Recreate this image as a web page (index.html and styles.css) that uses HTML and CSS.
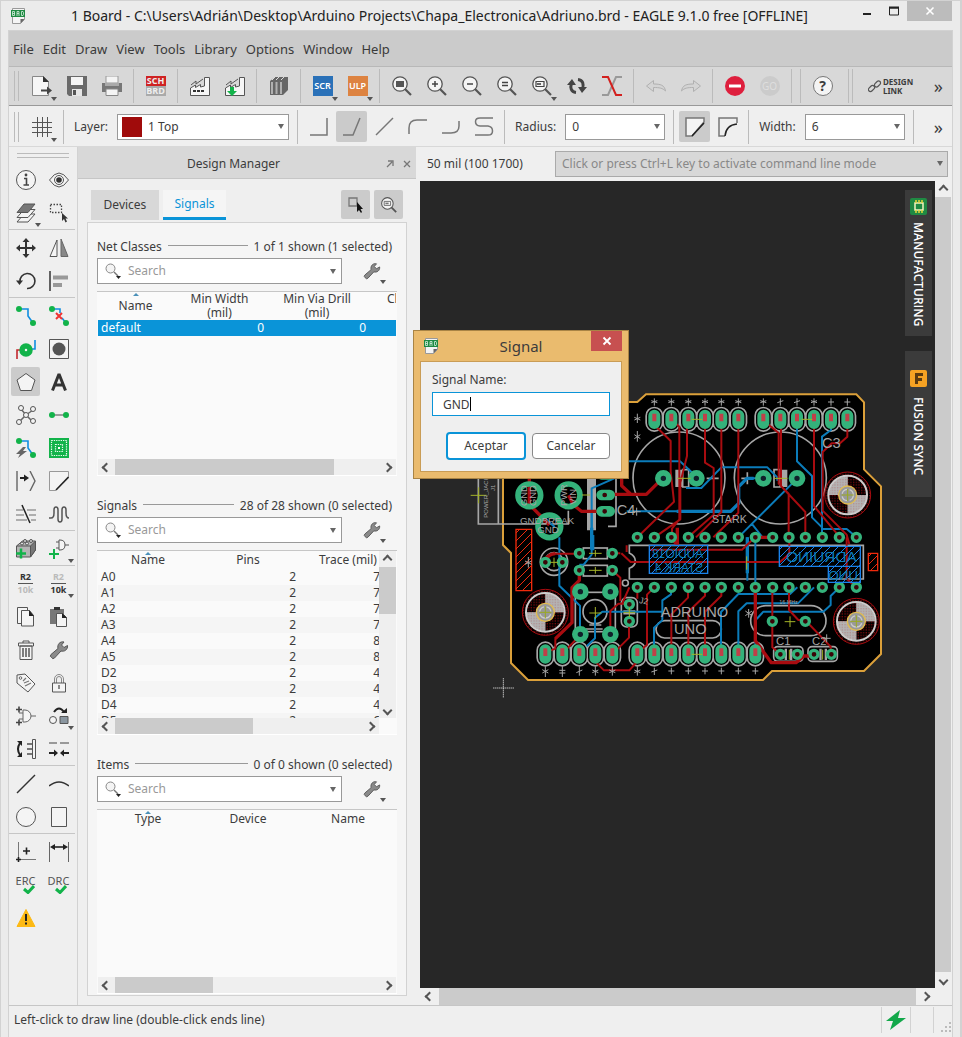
FILE: index.html
```html
<!DOCTYPE html>
<html lang="en">
<head>
    <meta charset="UTF-8">
    <meta name="viewport" content="width=device-width, initial-scale=1.0">
    <title>1 Board - EAGLE 9.1.0 free</title>
    <link rel="stylesheet" href="styles.css">
</head>
<body>
    <!-- shared icons -->
    <svg class="sprite" aria-hidden="true">
        <symbol id="i-brd" viewBox="0 0 16 16">
            <path d="M2.500.500h12v11l-4 4h-8z" fill="#f4f4f4" stroke="#999" />
            <path d="M14.500 11h-4v4.500z" fill="#666" />
            <path d="M1 2h14v7H1z" fill="#1f8a43" />
            <path d="M2.500 3.500v4h2v-4zM2.500 5.500h2M7 8V3.500h2v2H7M9 5.500V8M11.500 3.500v4h1.500l.5-1v-2l-.5-1z" fill="none" stroke="#d8f0df" stroke-width=".8" />
        </symbol>
        <symbol id="i-search" viewBox="0 0 16 16">
            <circle cx="5.500" cy="5.500" r="4.500" fill="#f4f4f4" stroke="#888" />
            <path d="M9 9l4 4" stroke="#777" stroke-width="1.500" />
            <path d="M11 13h5l-2.500 3z" fill="#222" />
        </symbol>
        <symbol id="i-wrench" viewBox="0 0 20 20">
            <path d="M2.500 17.500a2 2 0 0 1-.5-3L9 8.500c-1-4 2-7.500 6-6.500l-2.500 3 2.500 2.500 3.500-2c.5 4-3 6.500-6.500 5.500L5.500 18a2 2 0 0 1-3-.5z" fill="#8a8a8a" stroke="#555" />
        </symbol>
        <symbol id="i-lens" viewBox="0 0 20 20">
            <circle cx="8" cy="8" r="7.200" fill="#f4f4f4" stroke="#555" stroke-width="1.300" />
            <path d="M13 13l6 6" stroke="#555" stroke-width="2.200" />
        </symbol>
        <symbol id="i-factory" viewBox="0 0 20 20">
            <path d="M.5 19.500V12l5-3v2.500l5-3v2.500l4-1V1.500h5v18z" fill="#f6f6f6" stroke="#555" />
            <path d="M1 9l5-4v3l7-5" fill="none" stroke="#555" />
        </symbol>
        <symbol id="i-gate" viewBox="0 0 20 20">
            <path d="M7 4v12h2a6 6 0 0 0 0-12zM3 7h4M3 13h4M15 10h5" fill="#f6f6f6" stroke="#666" />
        </symbol>
    </svg>

    <div class="window">
        <header class="titlebar">
            <svg class="app-icon"><use href="#i-brd" /></svg>
            <h1>1 Board - C:\Users\Adrián\Desktop\Arduino Projects\Chapa_Electronica\Adriuno.brd - EAGLE 9.1.0 free [OFFLINE]</h1>
            <div class="window-buttons">
                <button aria-label="Minimize"><svg viewBox="0 0 10 10"><path d="M1 8h8" stroke="#222" stroke-width="2" /></svg></button>
                <button aria-label="Maximize"><svg viewBox="0 0 10 10"><path d="M0 2h10M.5 2v7h9V2" fill="none" stroke="#222" /><path d="M0 1.500h10" stroke="#222" stroke-width="2" /></svg></button>
                <button class="close" aria-label="Close"><svg viewBox="0 0 10 10"><path d="M1.500 1.500l7 7m0-7l-7 7" stroke="#fff" stroke-width="1.600" /></svg></button>
            </div>
        </header>

        <div class="frame">
            <nav class="menubar">
                <a href="#">File</a>
                <a href="#">Edit</a>
                <a href="#">Draw</a>
                <a href="#">View</a>
                <a href="#">Tools</a>
                <a href="#">Library</a>
                <a href="#">Options</a>
                <a href="#">Window</a>
                <a href="#">Help</a>
            </nav>

            <div class="toolbar toolbar-main">
                <span class="grip"></span>
                <button class="tb drop" aria-label="New"><svg viewBox="0 0 20 20"><path d="M.5.500h11l5 5v14H.5z" fill="#f6f6f6" stroke="#888" /><path d="M11 0v6h6z" fill="#333" /><path d="M9 14.500h7" stroke="#444" stroke-width="2" /><path d="M15 10.500l5 4-5 4z" fill="#444" /></svg></button>
                <button class="tb" aria-label="Save"><svg viewBox="0 0 20 20"><path d="M0 0h20v20H2l-2-2z" fill="#6a6a6a" /><path d="M4 1h12v8H4z" fill="#f4f4f4" /><path d="M5 13h10v7H5z" fill="#e6e6e6" /><path d="M6 14h3v5H6z" fill="#555" /></svg></button>
                <button class="tb" aria-label="Print"><svg viewBox="0 0 20 20"><path d="M4 0h12v7H4z" fill="#f4f4f4" stroke="#999" /><path d="M0 7h20v9H0z" fill="#777" /><path d="M3 7h14v3H3z" fill="#aaa" /><path d="M4 13h12v6.500H4z" fill="#f4f4f4" stroke="#888" /></svg></button>
                <span class="sep"></span>
                <button class="tb" aria-label="Switch to schematic"><span class="sch-brd"><b>SCH</b><b>BRD</b></span></button>
                <span class="sep"></span>
                <button class="tb" aria-label="Manufacturing preview"><svg viewBox="0 0 20 20"><use href="#i-factory" /><path d="M3 15h11" stroke="#333" stroke-width="2" stroke-dasharray="3 1" /></svg></button>
                <button class="tb" aria-label="Export CAM"><svg viewBox="0 0 20 20"><use href="#i-factory" /><path d="M5 11h4v4h3l-5 5-5-5h3z" fill="#12b34a" /></svg></button>
                <span class="sep"></span>
                <button class="tb" aria-label="Library manager"><svg viewBox="0 0 20 20"><path d="M1 5l5-4h13v13l-5 5H1z" fill="#666" /><path d="M1.500 5.500h3v13h-3zM6 5.500h3v13H6zM10.500 5.500h3v13h-3z" fill="#b0b0b0" stroke="#666" /><path d="M3 4l3-3M7 4l3-3M12 4l3-3" stroke="#ddd" /></svg></button>
                <span class="sep"></span>
                <button class="tb drop" aria-label="Run script"><span class="badge scr">SCR</span></button>
                <button class="tb drop" aria-label="Run ULP"><span class="badge ulp">ULP</span></button>
                <span class="sep"></span>
                <button class="tb" aria-label="Zoom to fit"><svg viewBox="0 0 20 20"><use href="#i-lens" /><path d="M4 5h8v6H4z" fill="#555" /></svg></button>
                <button class="tb" aria-label="Zoom in"><svg viewBox="0 0 20 20"><use href="#i-lens" /><path d="M5 8h6M8 5v6" stroke="#444" stroke-width="1.500" /></svg></button>
                <button class="tb" aria-label="Zoom out"><svg viewBox="0 0 20 20"><use href="#i-lens" /><path d="M5 8h6" stroke="#444" stroke-width="1.500" /></svg></button>
                <button class="tb" aria-label="Redraw"><svg viewBox="0 0 20 20"><use href="#i-lens" /><path d="M5 6.500h6M5 9.500h6" stroke="#444" stroke-width="1.500" /></svg></button>
                <button class="tb drop" aria-label="Zoom select"><svg viewBox="0 0 20 20"><use href="#i-lens" /><path d="M4 5.500h8v5H4z" fill="none" stroke="#444" stroke-width="1.200" /><path d="M5 7h4v2H5z" fill="#666" /></svg></button>
                <button class="tb" aria-label="Refresh"><svg viewBox="0 0 20 20"><path d="M9 16.500C4 16 3 12 4.500 7M11 3.500c5 .5 6 4.500 4.500 9.500" fill="none" stroke="#444" stroke-width="3" /><path d="M0 9l5-6 4 6zM11 11h9l-5 6z" fill="#444" /></svg></button>
                <button class="tb" aria-label="Swap layers"><svg viewBox="0 0 20 20"><path d="M0 19h6l8-18h6" fill="none" stroke="#999" stroke-width="2" /><path d="M0 1h6l8 18h6" fill="none" stroke="#d3211f" stroke-width="2" /></svg></button>
                <span class="sep"></span>
                <button class="tb" aria-label="Undo" disabled><svg viewBox="0 0 20 20"><path d="M.5 10l7-5.500v3.500c7 0 11 1 12 7-3-3-6-3.500-12-3.500v4z" fill="#d4d4d4" stroke="#b0b0b0" /></svg></button>
                <button class="tb" aria-label="Redo" disabled><svg viewBox="0 0 20 20"><path d="M19.500 10l-7-5.500v3.500c-7 0-11 1-12 7 3-3 6-3.500 12-3.500v4z" fill="#d4d4d4" stroke="#b0b0b0" /></svg></button>
                <span class="sep"></span>
                <button class="tb" aria-label="Stop"><svg viewBox="0 0 20 20"><circle cx="10" cy="10" r="10" fill="#de1f3d" /><path d="M4 8.500h12v3H4z" fill="#fff" /></svg></button>
                <button class="tb" aria-label="Go" disabled><span class="go">GO</span></button>
                <span class="sep"></span>
                <span class="sep"></span>
                <button class="tb" aria-label="Help"><span class="help">?</span></button>
                <span class="sep wide"></span>
                <span class="sep tight"></span>
                <button class="design-link"><svg viewBox="0 0 14 14"><g fill="none" stroke="#555" stroke-width="1.200"><rect x="0" y="7.500" width="7" height="4" rx="2" transform="rotate(-45 3.500 9.500)" /><rect x="6" y="3" width="7" height="4" rx="2" transform="rotate(-45 9.500 5)" /></g></svg><span>DESIGN<br>LINK</span></button>
                <button class="more" aria-label="More">»</button>
            </div>

            <div class="toolbar toolbar-params">
                <span class="grip"></span>
                <button class="tb drop" aria-label="Grid"><svg viewBox="0 0 20 20"><path d="M0 5.500h20M0 10.500h20M0 15.500h20M5.500 0v20M10.500 0v20M15.500 0v20" stroke="#555" /></svg></button>
                <span class="sep"></span>
                <label for="layer">Layer:</label>
                <div class="select layer"><select id="layer"><option>1 Top</option></select></div>
                <span class="sep"></span>
                <button class="tb2" aria-label="Bend 0"><svg viewBox="0 0 20 20"><path d="M1 18h17V1" /></svg></button>
                <button class="tb2 active" aria-label="Bend 1"><svg viewBox="0 0 20 20"><path d="M1 18h10l7-17" /></svg></button>
                <button class="tb2" aria-label="Bend 2"><svg viewBox="0 0 20 20"><path d="M1 18L18 1" /></svg></button>
                <button class="tb2" aria-label="Bend 3"><svg viewBox="0 0 20 20"><path d="M1 17v-6q0-8 8-8h10" /></svg></button>
                <button class="tb2" aria-label="Bend 4"><svg viewBox="0 0 20 20"><path d="M1 16h9q8 0 8-7V4" /></svg></button>
                <button class="tb2" aria-label="Bend 5"><svg viewBox="0 0 20 20"><path d="M19 1H6c-6 0-6 7 0 8h8c6 1 6 9 0 9H1" /></svg></button>
                <span class="sep"></span>
                <label for="radius">Radius:</label>
                <div class="select"><select id="radius"><option>0</option></select></div>
                <span class="sep"></span>
                <button class="tb2 active" aria-label="Miter straight"><svg viewBox="0 0 20 20"><path class="paper" d="M19 5V1H1v18h6z" /><path class="dark" d="M7 19L19 6" /></svg></button>
                <button class="tb2" aria-label="Miter round"><svg viewBox="0 0 20 20"><path d="M19 6V1H1v18h6" /><path class="dark" d="M7 19q1-11 12-12" /></svg></button>
                <span class="sep"></span>
                <label for="width">Width:</label>
                <div class="select"><select id="width"><option>6</option></select></div>
                <span class="sep"></span>
                <button class="more" aria-label="More">»</button>
            </div>

            <main class="workspace">
                <aside class="toolbox">
                    <span class="grip-h"></span>
                    <div class="tools">
                        <button aria-label="Info"><svg viewBox="0 0 20 20"><circle cx="10" cy="10" r="9.500" class="w" /><path d="M8 8.500h2.500v6M7.500 15h5.500" fill="none" stroke="#444" stroke-width="1.600" /><circle cx="10" cy="5" r="1.400" fill="#444" /></svg></button>
                        <button aria-label="Show"><svg viewBox="0 0 20 20"><path d="M.5 10q9.500-14 19 0-9.500 14-19 0z" class="w" /><circle cx="10" cy="10" r="4.500" class="w" /><circle cx="10" cy="10" r="2.800" fill="#333" /></svg></button>
                        <button class="drop" aria-label="Layers"><svg viewBox="0 0 20 20"><path d="M1 19h11l7-8H8z" class="w" /><path d="M1 14.500h11l7-8H8z" class="w" /><path d="M1 9.500h11l7-8.500H8z" fill="#777" stroke="#555" /></svg></button>
                        <button aria-label="Group"><svg viewBox="0 0 20 20"><path d="M1.500 1.500h11v8h-11z" fill="none" stroke="#444" stroke-width="1.300" stroke-dasharray="1.500 1.500" /><path d="M13 10v8l2-2 1.500 3.500 1.500-1-1.500-3H19z" fill="#333" /></svg></button>
                        <hr>
                        <button aria-label="Move"><svg viewBox="0 0 20 20"><path d="M10 2v16M2 10h16" stroke="#333" stroke-width="2" /><path d="M6.500 4L10 0l3.500 4zM6.500 16l3.500 4 3.500-4zM4 6.500L0 10l4 3.500zM16 6.500l4 3.500-4 3.500z" fill="#333" /></svg></button>
                        <button aria-label="Mirror"><svg viewBox="0 0 20 20"><path d="M8 2v16.500H1z" class="w" /><path d="M12 1v17.500h7z" fill="#888" stroke="#666" /></svg></button>
                        <button aria-label="Rotate"><svg viewBox="0 0 20 20"><path d="M4 11a7.500 7.500 0 1 1 7 6.500" fill="none" stroke="#333" stroke-width="1.600" /><path d="M0 9.500h7L3.500 14z" fill="#333" /></svg></button>
                        <button aria-label="Align"><svg viewBox="0 0 20 20"><path d="M1 0v20" stroke="#333" stroke-width="1.500" /><path d="M4 4.500h15v4H4zM4 12h9v4H4z" fill="#999" /></svg></button>
                        <hr>
                        <button aria-label="Route"><svg viewBox="0 0 20 20"><path d="M3 3h9v7l5 7" class="b" /><circle cx="3" cy="3" r="3" class="g" /><circle cx="17" cy="17" r="3" class="g" /></svg></button>
                        <button aria-label="Ripup"><svg viewBox="0 0 20 20"><path d="M3 3h8v4M13 12l4 5" class="b" /><circle cx="3" cy="3" r="3" class="g" /><circle cx="17" cy="17" r="3" class="g" /><path d="M7 7l6 6m0-6l-6 6" stroke="#e33" stroke-width="2" /></svg></button>
                        <button aria-label="Via"><svg viewBox="0 0 20 20"><path d="M1 20V11h4" fill="none" stroke="#c1272d" stroke-width="1.600" /><path d="M15 10h4V1" class="b" /><circle cx="10" cy="11" r="4" fill="#f4f4f4" stroke="#12b34a" stroke-width="5.500" /></svg></button>
                        <button aria-label="Hole"><svg viewBox="0 0 20 20"><path d="M.5.500h19v19H.5z" class="w" /><circle cx="10" cy="10" r="6.500" fill="#555" /></svg></button>
                        <button class="active" aria-label="Polygon"><svg viewBox="0 0 20 20"><path d="M10 1.500l9 6.500-3.500 10.500h-11L1 8z" class="w" /></svg></button>
                        <button aria-label="Text"><svg viewBox="0 0 20 20"><path d="M3.500 18.500L10 2l6.500 16.500M6 13h8" fill="none" stroke="#333" stroke-width="3" stroke-linejoin="bevel" /></svg></button>
                        <button aria-label="Ratsnest"><svg viewBox="0 0 20 20"><path d="M10 10L5 4M10 10l7-5M10 10l-6 6M10 10l6 6" stroke="#666" stroke-width="1.500" /><g class="w"><circle cx="5" cy="3" r="2.500" /><circle cx="17" cy="4" r="2.500" /><circle cx="3" cy="17" r="2.500" /><circle cx="17" cy="16" r="2.500" /><circle cx="10" cy="10" r="2.500" /></g></svg></button>
                        <button aria-label="Signal"><svg viewBox="0 0 20 20"><path d="M3 10h14" stroke="#888" stroke-width="1.600" /><circle cx="3" cy="10" r="3" class="g" /><circle cx="17" cy="10" r="3" class="g" /></svg></button>
                        <button aria-label="Autoroute"><svg viewBox="0 0 20 20"><path d="M3 3h9v7l5 7" class="b" /><circle cx="3" cy="3" r="3" class="g" /><circle cx="17" cy="17" r="3" class="g" /><path d="M7 9l-7 7h4l-2 4 9-7H7l3-4z" fill="#666" /></svg></button>
                        <button aria-label="Fanout"><svg viewBox="0 0 20 20"><path d="M0 0h20v20H0z" class="g" /><path d="M2.500 2.500h15v15h-15zM6.500 6.500h7v7h-7z" fill="none" stroke="#eafbef" stroke-width="1.200" stroke-dasharray="1.300 1" /><path d="M9 9h2v2H9z" fill="#fff" /></svg></button>
                        <button aria-label="Split"><svg viewBox="0 0 20 20"><path d="M1 0v20M14 0l5 10-5 10" fill="none" stroke="#666" stroke-width="1.400" /><path d="M4 7h5" stroke="#222" stroke-width="2" /><path d="M8 3.500L13 7l-5 3.500z" fill="#222" /></svg></button>
                        <button aria-label="Miter"><svg viewBox="0 0 20 20"><path d="M19.500 6V.5H.5v19H7" class="w light" /><path d="M7 19L19.500 6" stroke="#222" stroke-width="1.600" /></svg></button>
                        <button aria-label="Slice"><svg viewBox="0 0 20 20"><path d="M0 6h7M11 6h9M0 11h8M13 11h7M0 16h11M15 16h5" stroke="#999" stroke-width="1.500" /><path d="M6 1l8 18" stroke="#222" stroke-width="1.500" /></svg></button>
                        <button aria-label="Meander"><svg viewBox="0 0 20 20"><path d="M0 14h2q3 0 3-5V6q0-3 2-3t2 3v9q0 3 2 3t2-3V6q0-3 2-3t2 3v3q0 5 3 5" fill="none" stroke="#555" stroke-width="1.500" /></svg></button>
                        <hr>
                        <button aria-label="Add"><svg viewBox="0 0 20 20"><path d="M.5 7l6-5h13v9l-5 7H.5z" fill="#b4b4b4" stroke="#555" /><path d="M14.500 7l5-5v9l-5 7z" fill="#777" stroke="#555" /><path d="M.5 7h14" stroke="#555" /><g fill="#ddd" stroke="#555"><circle cx="6" cy="4.500" r="1.500" /><circle cx="11" cy="4.500" r="1.500" /><circle cx="9" cy="2" r="1.500" /><circle cx="15" cy="2" r="1.500" /></g><path d="M0 14.500h10M5 9.500v10" stroke="#12b34a" stroke-width="2.500" /></svg></button>
                        <button class="drop" aria-label="Invoke"><svg viewBox="0 0 20 20"><path d="M10 1v10h1q5 0 5-5t-5-5zM7 3h3M7 9h3M16 6h4" class="w" /><path d="M0 15h10M5 10v10" stroke="#12b34a" stroke-width="2" /></svg></button>
                        <hr>
                        <button aria-label="Name"><span class="r2">R2<i>10k</i></span></button>
                        <button class="drop" aria-label="Value"><span class="r2 value">R2<i>10k</i></span></button>
                        <button aria-label="Copy"><svg viewBox="0 0 20 20"><path d="M1.500.500h10v16h-10z" class="w" /><path d="M5.500 3.500h8l4 5v10.500h-12z" class="w" /><path d="M13 3v6h5z" fill="#222" /></svg></button>
                        <button aria-label="Paste"><svg viewBox="0 0 20 20"><path d="M1 2h14v15H1z" fill="#777" /><path d="M5 0h6v3H5z" fill="#333" /><path d="M7.500 6.500h6l4 4v9h-10z" class="w" /><path d="M13 6v5h5z" fill="#222" /></svg></button>
                        <button aria-label="Delete"><svg viewBox="0 0 20 20"><path d="M2.500 3h15v3h-15zM7 3V1h6v2M4 6h12v13.500H4z" class="w" /><path d="M7 8v9M10 8v9M13 8v9" stroke="#555" stroke-width="1.500" /></svg></button>
                        <button aria-label="Properties"><svg viewBox="0 0 20 20"><use href="#i-wrench" /></svg></button>
                        <button aria-label="Attributes"><svg viewBox="0 0 20 20"><path d="M1 2l8-1 10 10-7 8L1 10z" class="w" /><circle cx="4.500" cy="5" r="1.300" fill="none" stroke="#666" /><path d="M7 8l3-3M8 10l5-2M9 13l6-3" stroke="#777" stroke-width="1.200" /></svg></button>
                        <button aria-label="Lock"><svg viewBox="0 0 20 20"><path d="M5.500 10V6a4.500 4.500 0 0 1 9 0v4M7.500 10V6a2.500 2.500 0 0 1 5 0v4" fill="none" stroke="#888" /><path d="M3.500 10h13v9h-13z" class="w" /><path d="M10 12v4" stroke="#666" stroke-width="1.500" /></svg></button>
                        <button aria-label="Gateswap"><svg viewBox="0 0 20 20"><use href="#i-gate" /><path d="M0 3.500h6M3 .5v6M0 16.500h6M3 13.500v6" stroke="#444" stroke-width="1.600" /></svg></button>
                        <button class="drop" aria-label="Replace"><svg viewBox="0 0 20 20"><path d="M5 6q5-7 10 0" fill="none" stroke="#222" stroke-width="2" /><path d="M12 7h6V2z" fill="#222" /><circle cx="4" cy="14" r="3.500" class="w" /><path d="M11 10.500h8v7h-8z" fill="#8a96a0" stroke="#555" /></svg></button>
                        <button aria-label="Pinswap"><svg viewBox="0 0 20 20"><path d="M4 4q-4 6 0 12" fill="none" stroke="#222" stroke-width="2" /><path d="M1 2h5v5zM1 18h5v-5z" fill="#222" /><path d="M11 5h6M11 10h6M11 15h6" stroke="#777" stroke-width="2" /><path d="M16.500.500h3v19h-3z" class="w" /></svg></button>
                        <button aria-label="Optimize"><svg viewBox="0 0 20 20"><path d="M0 4h8M11 4h9" stroke="#999" stroke-width="2" /><path d="M0 14h6M14 14h6" stroke="#222" stroke-width="2" /><path d="M5 10.500l4 3.500-4 3.500zM15 10.500L11 14l4 3.500z" fill="#222" /></svg></button>
                        <hr>
                        <button aria-label="Line"><svg viewBox="0 0 20 20"><path d="M1 19L19 1" stroke="#333" stroke-width="1.500" /></svg></button>
                        <button aria-label="Arc"><svg viewBox="0 0 20 20"><path d="M0 12q10-8 20 0" fill="none" stroke="#333" stroke-width="1.500" /></svg></button>
                        <button aria-label="Circle"><svg viewBox="0 0 20 20"><circle cx="10" cy="10" r="9.500" class="w" /></svg></button>
                        <button aria-label="Rect"><svg viewBox="0 0 20 20"><path d="M2.500.500h15v19h-15z" class="w" /></svg></button>
                        <hr>
                        <button aria-label="Mark"><svg viewBox="0 0 20 20"><path d="M2.500 0v16M4 17.500h16" stroke="#777" /><path d="M0 17.500h5M2.500 15v5M7 9h7M10.500 5.500v7" stroke="#222" stroke-width="1.600" /></svg></button>
                        <button aria-label="Dimension"><svg viewBox="0 0 20 20"><path d="M.5 0v20M19.500 0v20" stroke="#666" /><path d="M3 5h14" stroke="#222" stroke-width="1.600" /><path d="M1 5l5-3v6zM19 5l-5-3v6z" fill="#222" /></svg></button>
                        <button aria-label="ERC"><span class="check">ERC<svg viewBox="0 0 12 9"><path d="M1 4l4 3.500L11 1" fill="none" stroke="#12b34a" stroke-width="3" /></svg></span></button>
                        <button aria-label="DRC"><span class="check">DRC<svg viewBox="0 0 12 9"><path d="M1 4l4 3.500L11 1" fill="none" stroke="#12b34a" stroke-width="3" /></svg></span></button>
                        <button aria-label="Errors"><svg viewBox="0 0 20 20"><path d="M10 1.500l9 17H1z" fill="#fdb913" stroke="#fdb913" stroke-linejoin="round" /><path d="M10 6v7M10 14.500v2" stroke="#222" stroke-width="2" /></svg></button>
                    </div>
                </aside>

                <section class="manager">
                    <div class="manager-title">
                        <h2>Design Manager</h2>
                        <button aria-label="Undock"><svg viewBox="0 0 8 8"><path d="M1 7l5-5M2 1h5v5" fill="none" stroke="#777" stroke-width="1.300" /></svg></button>
                        <button aria-label="Close panel"><svg viewBox="0 0 8 8"><path d="M1 1l6 6m0-6L1 7" stroke="#777" stroke-width="1.300" /></svg></button>
                    </div>
                    <div class="tabs">
                        <button class="tab">Devices</button>
                        <button class="tab current">Signals</button>
                        <span class="spacer"></span>
                        <button class="tool" aria-label="Select"><svg viewBox="0 0 16 16"><path d="M1 1h8v8H1z" fill="none" stroke="#777" stroke-width="1.300" /><path d="M9 5v10l2-2 2 3 1-1-1.500-3H15z" fill="#111" /></svg></button>
                        <button class="tool" aria-label="Zoom to selection"><svg viewBox="0 0 20 20"><use href="#i-lens" /><path d="M4 5.500h8v5H4z" fill="none" stroke="#555" /><path d="M5.500 7h4v2h-4z" fill="#777" /></svg></button>
                    </div>
                    <div class="panels">
                        <div class="panel">
                            <div class="panel-head"><span>Net Classes</span><i></i><span>1 of 1 shown (1 selected)</span></div>
                            <div class="search-row">
                                <div class="search"><svg><use href="#i-search" /></svg><input type="text" placeholder="Search" aria-label="Search net classes"></div>
                                <button class="wrench" aria-label="Net class options"><svg><use href="#i-wrench" /></svg></button>
                            </div>
                            <div class="list">
                                <div class="list-body">
                                    <table class="net-classes">
                                        <thead><tr><th class="sorted">Name</th><th>Min Width<br>(mil)</th><th>Min Via Drill<br>(mil)</th><th class="cut">Cl</th></tr></thead>
                                        <tbody><tr class="selected"><td>default</td><td>0</td><td>0</td><td></td></tr></tbody>
                                    </table>
                                </div>
                                <div class="hscroll"><button aria-label="Scroll left"></button><div class="track"><span class="thumb long"></span></div><button class="next" aria-label="Scroll right"></button></div>
                            </div>
                        </div>

                        <div class="panel">
                            <div class="panel-head"><span>Signals</span><i></i><span>28 of 28 shown (0 selected)</span></div>
                            <div class="search-row">
                                <div class="search"><svg><use href="#i-search" /></svg><input type="text" placeholder="Search" aria-label="Search signals"></div>
                                <button class="wrench" aria-label="Signal options"><svg><use href="#i-wrench" /></svg></button>
                            </div>
                            <div class="list with-vscroll">
                                <div class="list-body">
                                    <table class="signals">
                                        <thead><tr><th class="sorted">Name</th><th>Pins</th><th>Trace (mil)</th></tr></thead>
                                        <tbody>
                                            <tr><td>A0</td><td>2</td><td>7</td></tr>
                                            <tr><td>A1</td><td>2</td><td>7</td></tr>
                                            <tr><td>A2</td><td>2</td><td>7</td></tr>
                                            <tr><td>A3</td><td>2</td><td>7</td></tr>
                                            <tr><td>A4</td><td>2</td><td>8</td></tr>
                                            <tr><td>A5</td><td>2</td><td>8</td></tr>
                                            <tr><td>D2</td><td>2</td><td>4</td></tr>
                                            <tr><td>D3</td><td>2</td><td>4</td></tr>
                                            <tr><td>D4</td><td>2</td><td>4</td></tr>
                                            <tr><td>D5</td><td>2</td><td>6</td></tr>
                                        </tbody>
                                    </table>
                                </div>
                                <div class="vscroll"><button class="up" aria-label="Scroll up"></button><div class="track"><span class="thumb short"></span></div><button class="down" aria-label="Scroll down"></button></div>
                                <div class="hscroll"><button aria-label="Scroll left"></button><div class="track"><span class="thumb mid"></span></div><button class="next" aria-label="Scroll right"></button></div>
                            </div>
                        </div>

                        <div class="panel">
                            <div class="panel-head"><span>Items</span><i></i><span>0 of 0 shown (0 selected)</span></div>
                            <div class="search-row">
                                <div class="search"><svg><use href="#i-search" /></svg><input type="text" placeholder="Search" aria-label="Search items"></div>
                                <button class="wrench" aria-label="Item options"><svg><use href="#i-wrench" /></svg></button>
                            </div>
                            <div class="list">
                                <div class="list-body">
                                    <table class="items">
                                        <thead><tr><th class="sorted">Type</th><th>Device</th><th>Name</th></tr></thead>
                                    </table>
                                </div>
                                <div class="hscroll"><button aria-label="Scroll left"></button><div class="track"><span class="thumb small"></span></div><button class="next" aria-label="Scroll right"></button></div>
                            </div>
                        </div>
                    </div>
                </section>

                <section class="editor">
                    <div class="command-row">
                        <span class="coords">50 mil (100 1700)</span>
                        <div class="select command"><select aria-label="Command line"><option>Click or press Ctrl+L key to activate command line mode</option></select></div>
                    </div>
                    <div class="canvas">
                        <!-- board drawing, 3 units per screen pixel -->
                        <svg class="board" viewBox="0 0 1545 2421">
                            <defs>
                                <pattern id="dots" width="8" height="8" patternUnits="userSpaceOnUse"><path d="M0 0h4v4H0z" fill="#a80c10" /></pattern>
                                <pattern id="hatch" width="24" height="24" patternUnits="userSpaceOnUse"><path d="M-6 30L30-6M-6 6L6-6M18 30L30 18" stroke="#1a82ea" stroke-width="3" /></pattern>
                                <pattern id="hatch-red" width="24" height="24" patternUnits="userSpaceOnUse"><path d="M-6 30L30-6M-6 6L6-6M18 30L30 18" stroke="#ee2a0c" stroke-width="3" /></pattern>
                                <path id="headers" d="M703 704v22M754 704v22M805 704v22M855 704v22M904 704v22M955 704v22M1030 704v22M1081 704v22M1131 704v22M1182 704v22M1233 704v22M1282 704v22M376 1408v22M427 1408v22M478 1408v22M526 1408v22M577 1408v22M652 1408v22M703 1408v22M754 1408v22M805 1408v22M855 1408v22M904 1408v22M955 1408v22M1006 1408v22" />
                                <path id="pins" d="M652 1069h.1M703 1069h.1M754 1069h.1M805 1069h.1M855 1069h.1M904 1069h.1M955 1069h.1M1006 1069h.1M1058 1069h.1M1107 1069h.1M1156 1069h.1M1207 1069h.1M1258 1069h.1M1309 1069h.1M652 1219h.1M703 1219h.1M754 1219h.1M805 1219h.1M855 1219h.1M904 1219h.1M955 1219h.1M1006 1219h.1M1058 1219h.1M1107 1219h.1M1156 1219h.1M1207 1219h.1M1258 1219h.1M1309 1219h.1M376 1144h.1M427 1144h.1M478 1117h.1M577 1117h.1M478 1168h.1M577 1168h.1M628 1270h.1M628 1321h.1M1057 1321h.1M1156 1321h.1M1081 1420h.1M1132 1420h.1M1182 1420h.1M1234 1420h.1" />
                                <path id="vias" d="M730 892h.1M829 892h.1M1030 892h.1M1131 892h.1M481 1232h.1M571 1232h.1M481 1360h.1M571 1360h.1" />
                                <g id="mount">
                                    <path d="M0 0V-56A56 56 0 0 0-56 0zM0 0V56A56 56 0 0 0 56 0z" fill="#b4b4b4" />
                                    <circle r="69" fill="url(#dots)" fill-opacity=".7" stroke="#a80c10" stroke-width="3" />
                                    <path d="M0 0V-56A56 56 0 0 0-56 0zM0 0V56A56 56 0 0 0 56 0z" fill="#b4b4b4" fill-opacity=".7" />
                                    <circle r="58" fill="none" stroke="#ccc" stroke-width="6" />
                                    <circle r="27" fill="#999" stroke="#e2bd50" stroke-width="4" />
                                    <circle r="17" fill="none" stroke="#ccc" stroke-width="4" stroke-dasharray="20 8" />
                                    <path d="M-18 0h36M0-18v36" stroke="#9aaa20" stroke-width="3" />
                                </g>
                            </defs>

                            <path class="outline" d="M249 880V1092L273 1116V1446L324 1497H1029L1056 1470H1332L1383 1419V916L1332 865V664L1309 640H678L652 663H570V880z" />

                            <g class="silk">
                                <circle cx="777" cy="891" r="138" />
                                <circle cx="1081" cy="891" r="138" />
                                <path d="M175 880v149h270v-40M235 880v149M588 880v156h-24" />
                                <path d="M628 1093h702v101H628v-32q18-7 18-22t-18-24z" />
                                <rect x="466" y="1234" width="120" height="118" />
                                <circle cx="525" cy="1292" r="36" />
                                <rect x="490" y="1101" width="72" height="32" />
                                <rect x="490" y="1153" width="72" height="32" />
                                <path d="M462 1117h28m72 0h28M462 1168h28m72 0h28" />
                                <circle cx="402" cy="1142" r="41" />
                                <circle cx="402" cy="1142" r="27" />
                                <rect x="604" y="1250" width="48" height="88" rx="16" />
                                <rect x="992" y="1274" width="226" height="90" rx="45" />
                                <rect x="1061" y="1397" width="88" height="44" rx="12" />
                                <rect x="1164" y="1397" width="88" height="44" rx="12" />
                                <path d="M498 1344h50m-40-12h36M610 1290h36m-36 8h36" />
                                <rect x="708" y="1319" width="196" height="52" rx="26" />
                                <path d="M860 892h36M964 892h36m-18-18v36M788 866h18v52h-18zM1062 866h18v52h-18z" />
                                <circle cx="616" cy="1206" r="9" />
                            </g>
                            <path class="silk-fill" d="M501 880h27v168h-27zM766 866h20v52h-20zM1084 866h18v52h-18zM1094 1403h7v34h-7zM1110 1403h7v34h-7zM1198 1403h7v34h-7zM1214 1403h7v34h-7z" />

                            <use href="#headers" class="head-silk" />
                            <use href="#headers" class="head-gap" />

                            <!-- bottom layer -->
                            <g class="bottom">
                                <path d="M620 841h160l56 52M620 991h312l24-24v-50l25-25h50M798 921h46l60-62h138l30 30v10" />
                                <path d="M1131 715v126l45 44v124l30 30v28M1233 715v32l-27 20v300M1131 893L955 1069M995 1028l32 40M1206 1044h74l29 24" />
                                <path d="M418 1069v145l62 60v86M515 991v130l-24 30h-13M520 1062v46" />
                                <path d="M500 1396l25-24v-62l22-18h180v-34l26-18v-24M702 1420V1340l25-22v-24M982 1069v130M1006 1069v356" />
                                <path d="M1132 1219l-22 20H955l-52 54v126M1182 1219l-48 48H980l-25 24v126M1258 1219l-26 26v27l-22 20h-180l-20 22" />
                                <path d="M404 1038l-40-36M583 892l-68 30v120" />
                            </g>
                            <path class="bottom heavy" d="M770 991h162l24-24v-50l25-25h20M982 1069v108M515 1040v66" />
                            <!-- top layer -->
                            <g class="top">
                                <path d="M703 720l-2 10 51 50v92l10 90-110 107M754 715l24 22v278l-22 28v24M801 715v110l-20 80v110l-78 54M855 725v120l26 16v140l-77 68M904 725v268l-76 76M955 725v270l-75 74" />
                                <path d="M1032 720l44 36v152l30 30v130M1083 715v200l73 78v76M1182 715v260l76 92M1282 715v52l-22 20h-25l-27 26v176l72 72 8 28" />
                                <path d="M604 1117l28 26h448l28-24v-50M620 1093v20" />
                                <path d="M376 1132q10-14 30-14h72M577 1117h24M478 1168v30l-22 22v105l-50 48v30l-30 12M577 1168l24 22v70M628 1219l-22 50M703 1219l-22 22v150l-30 26M754 1420V1300l50-50v-31M652 1219v34M577 1420l50-50v-48M427 1418l54-56M526 1420v22l26 26h76l25-28" />
                                <path d="M805 1420V1292l50-48v-25M855 1420V1292l49-48v-25M1057 1219v180l24 20M1107 1219v68l28 30h20l77 80v22" />
                                <path d="M571 1340v-50l24-22h33M1280 1069v125l28 24M690 1106h276l40-38" />
                            </g>
                            <path class="top heavy" d="M328 880v90l60 62M446 943l14 28 24 20h70M555 940h124l48-48M605 880v34l26 24M1006 1219v160l48 66h74l24-20h44M478 1168v30l-22 22v105l-50 48M376 1140q10-22 30-22M772 1040v50l-24-20M1004 1069h54" />

                            <use href="#headers" class="head-pad" />
                            <path class="long-pad" d="M545 880h24M545 942h24M545 991h24" />
                            <use href="#headers" class="head-hole" />
                            <use href="#pins" class="pin" />
                            <use href="#pins" class="pin-hole" />
                            <use href="#vias" class="via" />
                            <use href="#vias" class="via-hole" />
                            <path class="pin-hole" d="M554 942h.1M554 991h.1" />
                            <g class="big-pad">
                                <circle cx="328" cy="943" r="34" />
                                <circle cx="446" cy="943" r="34" />
                                <circle cx="388" cy="1036" r="34" />
                            </g>

                            <use href="#mount" transform="translate(1283 942)" />
                            <use href="#mount" transform="translate(376 1294) rotate(90)" />
                            <use href="#mount" transform="translate(1309 1321) rotate(90)" />

                            <g fill="url(#hatch)" stroke="#1a82ea" stroke-width="4">
                                <path d="M688 1093h175v84H688zM1078 1096h243v60h-243zM1225 1156h96v48h-96z" />
                            </g>
                            <g fill="url(#hatch-red)" stroke="#ee2a0c" stroke-width="4">
                                <path d="M288 1045h47v184h-47zM1345 1117h28v52h-28z" />
                            </g>
                            <path class="origin" d="M152 943h48m-24-24v48M486 942h24M507 1117h38m-19-10v20M507 1168h38m-19-10v20M508 1296h36m-18-18v36M610 1294h36m-18-14v28M815 715h32M1145 715h32M815 1420h32M1094 1322h32m-16-16v32M980 1126v40M772 892h40M1062 892h40M1108 1406v30M1208 1406v30M390 1144h24m-12-14v28" />

                            <g class="silk-text">
                                <text x="300" y="1030" font-size="29">GNDBREAK</text>
                                <text x="352" y="1057" font-size="29">GND</text>
                                <text x="590" y="1003" font-size="44">C4</text>
                                <text x="1206" y="801" font-size="44">C3</text>
                                <text x="876" y="1026" font-size="32">STARK</text>
                                <text x="722" y="1309" font-size="44">ADRUINO</text>
                                <text x="762" y="1360" font-size="44">UNO</text>
                                <text x="1068" y="1393" font-size="34">C1</text>
                                <text x="1176" y="1393" font-size="34">C2</text>
                                <text x="1078" y="1268" font-size="16">16 MHz</text>
                                <text transform="translate(322 975) rotate(-90)" font-size="28">GND</text>
                                <text transform="translate(348 975) rotate(-90)" font-size="28">GND</text>
                                <text transform="translate(442 975) rotate(-90)" font-size="28">PWR</text>
                                <text transform="translate(468 971) rotate(-90)" font-size="28">VIN</text>
                                <text transform="translate(204 1010) rotate(-90)" font-size="18">POWER_JACK</text>
                                <text transform="translate(225 930) rotate(-90)" font-size="18">J1</text>
                                <text transform="translate(656 1266) rotate(10)" font-size="26">J2</text>
                            </g>
                            <g class="mirror-text">
                                <text transform="translate(850 1130) scale(-1 1)" font-size="36">AUDIO18</text>
                                <text transform="translate(850 1174) scale(-1 1)" font-size="36">STARK 4</text>
                                <text transform="translate(1310 1142) scale(-1 1)" font-size="46">ADRUINO</text>
                                <text transform="translate(1314 1196) scale(-1 1)" font-size="40">UNO</text>
                            </g>
                            <path class="marks" d="M703 652v22m-9-9l18-6m-18 0l18 6M754 652v22m-9-9l18-6m-18 0l18 6M805 652v22m-9-9l18-6m-18 0l18 6M855 652v22m-9-9l18-6m-18 0l18 6M904 652v22m-9-9l18-6m-18 0l18 6M955 652v22m-9-9l18-6m-18 0l18 6M1030 652v22m-9-9l18-6m-18 0l18 6M1081 652v22m-9-9l18-6M1131 652v22m-9-9l18-6M1182 652v22m-9-9l18-6m-18 0l18 6M1233 652v22m-9-11h18M1282 652v22m-9-11h18M652 698v28m-9-9l18-8m-18 0l18 8M652 750v32m-9-9l18-12m-18 0l18 12M376 1456v32m-9-12l18-10m-18 0l18 10M427 1456v32m-9-12h18m-18-8h18M478 1456v28m-9-9l18-8M526 1456v28m-9-9l18-8m-18 0l18 8M577 1456v28m-9-9l18-8m-18 0l18 8M652 1456v28m-9-9l18-8m-18 0l18 8M703 1460v22m-9-9l18-6M754 1460v20m-9-10h18M805 1460v20m-9-10h18M855 1460v20m-9-10h18M904 1460v20m-9-10h18M955 1460v20m-9-10h18M1006 1460v20m-9-10h18M976 1290l20 14m-20 0l20-14m-10-6v26M325 1128v32m-10-10l20-10m-20 0l20 10M650 980v24m-12-12h24M1220 1360v24m-12-12h24" />
                            <path class="cursor" d="M220 1521h62M250 1492v60" />
                        </svg>

                        <div class="side-tabs">
                            <button><svg viewBox="0 0 17 17"><rect width="17" height="17" rx="2" fill="#1f8a43" /><path d="M5 5h8v7H5z" fill="#1f8a43" stroke="#f4f4c0" stroke-width="1.500" /><path d="M6 2v3M9 2v3M12 2v3M6 12v3M9 12v3M12 12v3" stroke="#e6d63a" stroke-width="1.500" /></svg>MANUFACTURING</button>
                            <button class="fusion"><svg viewBox="0 0 17 17"><rect width="17" height="17" rx="2" fill="#f5a223" /><path d="M5 3h3v11H5zM8 3h5v3H8zM8 8h4v3H8z" fill="#5a3a10" /></svg>FUSION SYNC</button>
                        </div>
                    </div>
                    <div class="vscroll"><button class="up" aria-label="Scroll up"></button><div class="track"><span class="thumb"></span></div><button class="down" aria-label="Scroll down"></button></div>
                    <div class="hscroll"><button aria-label="Scroll left"></button><div class="track"><span class="thumb"></span></div><button class="next" aria-label="Scroll right"></button></div>
                </section>
            </main>

            <footer class="statusbar">
                <span>Left-click to draw line (double-click ends line)</span>
                <div class="status-icon"><svg viewBox="0 0 20 20"><path d="M14 0L0 11h7l-3 9L20 8h-8z" fill="#12a84a" /></svg></div>
                <div class="status-cell"></div>
                <div class="size-grip"><svg viewBox="0 0 10 10"><path d="M8 0h2v2H8zM8 4h2v2H8zM4 4h2v2H4zM8 8h2v2H8zM4 8h2v2H4zM0 8h2v2H0z" fill="#bbb" /></svg></div>
            </footer>
        </div>
    </div>

    <form class="dialog" role="dialog" aria-labelledby="dialog-title">
        <div class="dialog-title">
            <svg><use href="#i-brd" /></svg>
            <h2 id="dialog-title">Signal</h2>
            <button type="button" aria-label="Close dialog"><svg viewBox="0 0 10 10"><path d="M1.500 1.500l7 7m0-7l-7 7" stroke="#fff" stroke-width="1.800" /></svg></button>
        </div>
        <div class="dialog-body">
            <label for="signal-name">Signal Name:</label>
            <div class="signal-field"><input id="signal-name" type="text" value="GND"></div>
            <div class="dialog-buttons">
                <button type="submit" class="primary">Aceptar</button>
                <button type="button">Cancelar</button>
            </div>
        </div>
    </form>
</body>
</html>
```
FILE: styles.css
```css
* {
    box-sizing: border-box;
}
body {
    margin: 0;
    background: #ebebeb;
    color: #3c3c3c;
    font-family: "Noto Sans", "Open Sans", sans-serif;
    font-size: 12px;
    line-height: 16px;
}
button, input, select {
    font: inherit;
    color: inherit;
    margin: 0;
}
button {
    padding: 0;
    border: 0;
    background: none;
}
svg {
    display: block;
    flex: none;
}
h1, h2 {
    margin: 0;
    font-weight: 400;
}
.sprite {
    position: absolute;
    width: 0;
    height: 0;
}

/* window */
.window {
    display: flex;
    flex-direction: column;
    height: 100vh;
    min-height: 1037px;
    padding: 0 8px;
    border: 1px solid #d2d2d2;
    border-width: 1px 2px 0 1px;
}
.titlebar {
    display: flex;
    height: 29px;
    flex: none;
    align-items: center;
}
.app-icon {
    width: 16px;
    height: 16px;
    margin-left: 1px;
}
.titlebar h1 {
    flex: 1;
    text-align: center;
    white-space: nowrap;
    font-size: 14px;
    line-height: 20px;
    color: #222;
}
.window-buttons {
    display: flex;
    align-self: flex-start;
}
.window-buttons button {
    display: grid;
    width: 27px;
    height: 20px;
    place-items: center;
}
.window-buttons svg {
    width: 10px;
    height: 10px;
}
.window-buttons .close {
    width: 45px;
    background: #bcbcbc;
}
.frame {
    display: flex;
    flex: 1;
    min-height: 0;
    flex-direction: column;
    margin: 0 -1px;
    border: 1px solid #d2d2d2;
    border-bottom: 0;
    background: #efefef;
}
.menubar {
    display: flex;
    flex: none;
    height: 36px;
    align-items: center;
    gap: 9px;
    padding-left: 4px;
    border-bottom: 1px solid #b8b8b8;
    background: #cbcbcb;
}
.menubar a {
    color: #3a3a3a;
    font-size: 13px;
    text-decoration: none;
}

/* toolbars */
.toolbar {
    display: flex;
    flex: none;
    align-items: center;
    overflow: hidden;
}
.toolbar-main {
    height: 39px;
    border-bottom: 1px solid #999;
    background: #d8d8d8;
}
.toolbar-params {
    height: 41px;
    padding-top: 1px;
    border-bottom: 1px solid #d8d8d8;
    background: #efefef;
}
.grip {
    flex: none;
    width: 5px;
    height: 30px;
    margin: 0 5px;
    border: 1px solid #bbb;
    border-width: 0 1px;
}
.sep {
    flex: none;
    width: 1px;
    height: 34px;
    margin: 0 4px;
    background: #bbb;
}
.sep.wide {
    margin-left: 8px;
    margin-right: 3px;
}
.sep.tight {
    margin-left: 0;
    margin-right: 15px;
}
.tb, .tb2 {
    position: relative;
    display: grid;
    flex: none;
    width: 35px;
    height: 34px;
    place-items: center;
}
.tb svg, .tb2 svg {
    width: 20px;
    height: 20px;
}
.drop::after {
    content: "";
    position: absolute;
    right: 2px;
    bottom: 2px;
    border: 3px solid transparent;
    border-top: 4px solid #555;
    border-bottom: 0;
}
.tb2 {
    width: 31px;
    height: 31px;
    margin: 0 1px;
}
.tb2 path {
    fill: none;
    stroke: #777;
    stroke-width: 1.500;
}
.tb2 path.dark {
    stroke: #222;
}
.tb2 path.paper {
    fill: #f4f4f4;
}
.active {
    border-radius: 2px;
    background: #cbcbcb;
}
.sch-brd {
    width: 20px;
    height: 20px;
    background: #aaa;
    color: #eee;
    font-family: "Open Sans", sans-serif;
    font-size: 9px;
    line-height: 10px;
}
.sch-brd b {
    display: block;
}
.sch-brd b:first-child {
    background: #cf2222;
}
.badge {
    width: 20px;
    height: 20px;
    color: #fff;
    font-size: 9px;
    font-weight: 600;
    line-height: 20px;
}
.scr {
    background: #2a71b8;
}
.ulp {
    background: #dd8341;
}
.go, .help {
    width: 20px;
    height: 20px;
    border-radius: 50%;
}
.go {
    background: #cbcbcb;
    color: #dedede;
    font-size: 10px;
    line-height: 20px;
}
.help {
    border: 1px solid #777;
    background: #f4f4f4;
    font-size: 14px;
    font-weight: 700;
    line-height: 18px;
}
.design-link {
    display: flex;
    align-items: center;
    gap: 1px;
    font-size: 8px;
    font-weight: 700;
    line-height: 9px;
    text-align: left;
}
.design-link svg {
    width: 14px;
    height: 14px;
}
.more {
    height: 20px;
    margin: 0 9px 0 auto;
    font-size: 18px;
    line-height: 16px;
}
.toolbar-params label {
    margin: 0 9px 0 6px;
}
.select {
    position: relative;
    width: 100px;
    height: 26px;
    margin-right: 4px;
}
.select select {
    width: 100%;
    height: 100%;
    padding: 0 20px 0 6px;
    border: 1px solid #999;
    border-radius: 0;
    appearance: none;
    background: #fff;
}
.select::after, .search::after {
    content: "";
    position: absolute;
    top: 10px;
    right: 5px;
    border: 3px solid transparent;
    border-top: 5px solid #666;
    border-bottom: 0;
    pointer-events: none;
}
.select.layer {
    width: 172px;
}
.select.layer select {
    padding-left: 30px;
}
.select.layer::before {
    content: "";
    position: absolute;
    top: 3px;
    left: 5px;
    width: 20px;
    height: 20px;
    background: #a00b0b;
}

/* workspace */
.workspace {
    display: flex;
    flex: 1;
    min-height: 0;
}
.toolbox {
    flex: none;
    width: 69px;
    border-right: 1px solid #d2d2d2;
}
.grip-h {
    display: block;
    height: 5px;
    margin: 6px 8px 5px;
    border: 1px solid #bbb;
    border-width: 1px 0;
}
.tools {
    display: grid;
    grid-template-columns: 33px 33px;
    grid-auto-rows: auto;
}
.tools hr {
    grid-column: 1 / 3;
    width: 100%;
    height: 1px;
    margin: 0 0 1px;
    border: 0;
    background: #c6c6c6;
}
.tools button {
    position: relative;
    display: grid;
    height: 29px;
    margin: 2px;
    place-items: center;
}
.tools .drop::after {
    right: -1px;
    bottom: 0;
}
.tools button > svg {
    width: 20px;
    height: 20px;
}
.w {
    fill: #f4f4f4;
    stroke: #555;
}
.light {
    stroke: #999;
}
.g {
    fill: #12b34a;
}
.b {
    fill: none;
    stroke: #0f8ee0;
    stroke-width: 1.600;
}
.r2 {
    color: #333;
    font-size: 9px;
    font-weight: 700;
    line-height: 12px;
}
.r2 i {
    display: block;
    border-top: 1px solid #555;
    color: #bbb;
    font-style: normal;
}
.r2.value {
    color: #bbb;
}
.r2.value i {
    color: #333;
}
.check {
    color: #555;
    font-size: 11px;
    line-height: 11px;
}
.check svg {
    width: 12px;
    height: 9px;
    margin: -1px 0 0 7px;
}

/* design manager */
.manager {
    display: flex;
    flex: none;
    flex-direction: column;
    width: 338px;
}
.manager-title {
    display: flex;
    flex: none;
    height: 32px;
    align-items: center;
    gap: 9px;
    padding: 2px 5px 0 12px;
    border-bottom: 1px solid #c6c6c6;
    background: #d8d8d8;
}
.manager-title h2 {
    flex: 1;
    font-size: 12px;
    text-align: center;
}
.manager-title svg {
    width: 8px;
    height: 8px;
}
.tabs {
    display: flex;
    flex: none;
    gap: 4px;
    height: 43px;
    padding: 11px 13px 2px;
}
.tab {
    width: 68px;
    background: #d8d8d8;
}
.tab.current {
    width: 63px;
    border-bottom: 3px solid #0a94d8;
    background: #f5f5f5;
    color: #0a94d8;
    line-height: 26px;
}
.spacer {
    flex: 1;
}
.tool {
    display: grid;
    width: 29px;
    height: 29px;
    border-radius: 2px;
    background: #cbcbcb;
    place-items: center;
}
.tool svg {
    width: 16px;
    height: 16px;
}
.panels {
    display: flex;
    flex: 1;
    min-height: 0;
    flex-direction: column;
    gap: 20px;
    margin: 0 9px 9px;
    padding: 14px 9px 1px;
    border: 1px solid #d2d2d2;
    background: #f5f5f5;
}
.panel {
    display: flex;
    flex: 1;
    min-height: 0;
    flex-direction: column;
}
.panel-head {
    display: flex;
    align-items: center;
    gap: 6px;
    height: 18px;
    padding: 2px 5px 0 0;
}
.panel-head i {
    flex: 1;
    height: 1px;
    margin-top: -4px;
    background: #999;
}
.search-row {
    display: flex;
    flex: none;
    height: 26px;
    margin: 3px 0 7px;
}
.search {
    position: relative;
    display: flex;
    width: 245px;
    align-items: center;
    padding-left: 7px;
    border: 1px solid #999;
    background: #fff;
}
.search svg {
    width: 16px;
    height: 16px;
}
.search input {
    width: 200px;
    padding: 0 0 0 7px;
    border: 0;
    outline: 0;
    background: none;
}
.search input::placeholder {
    color: #999;
}
.wrench {
    position: relative;
    width: 24px;
    margin-left: 20px;
    padding: 0 0 0 1px;
}
.wrench svg {
    width: 18px;
    height: 18px;
}
.wrench::after {
    content: "";
    position: absolute;
    right: 0;
    bottom: 0;
    border: 3px solid transparent;
    border-top: 4px solid #555;
    border-bottom: 0;
}
.list {
    display: grid;
    flex: 1;
    min-height: 0;
    grid-template-rows: minmax(0, 1fr) 16px;
    grid-template-columns: minmax(0, 1fr);
    padding: 0 1px;
    border-top: 1px solid #c6c6c6;
    border-bottom: 1px solid #fff;
    background: #fafafa;
}
.list.with-vscroll {
    grid-template-columns: minmax(0, 1fr) 17px;
}
.list-body {
    overflow: hidden;
}
.list table {
    width: 300px;
    border-collapse: collapse;
    table-layout: fixed;
}
.list th, .list td {
    padding: 0;
    font-weight: 400;
    line-height: 14px;
}
.list td {
    height: 16px;
    padding-right: 2px;
    line-height: 16px;
    text-align: right;
}
.list td:first-child {
    padding-left: 3px;
    text-align: left;
}
.sorted {
    position: relative;
}
.sorted::before {
    content: "";
    position: absolute;
    top: 1px;
    left: 50%;
    margin-left: -3px;
    border: 3px solid transparent;
    border-top: 0;
    border-bottom: 3px solid #4a90b8;
}
.net-classes th:nth-child(1) {
    width: 75px;
}
.net-classes th:nth-child(2) {
    width: 93px;
}
.net-classes th:nth-child(3) {
    width: 102px;
}
.net-classes th.cut {
    padding-left: 19px;
    text-align: left;
    vertical-align: top;
}
.net-classes .selected {
    background: #0a94d8;
    color: #fff;
}
.signals th, .items th {
    width: 100px;
    height: 18px;
}
.signals tbody tr:nth-child(even) {
    background: #f5f5f5;
}
.list .signals td:nth-child(3) {
    padding-right: 18px;
}

/* scroll bars */
.hscroll, .vscroll {
    display: flex;
    background: #efefef;
}
.vscroll {
    flex-direction: column;
}
.hscroll button, .vscroll button {
    display: grid;
    flex: none;
    width: 17px;
    height: 16px;
    place-items: center;
}
.hscroll button::before, .vscroll button::before {
    content: "";
    width: 5px;
    height: 5px;
    border: 2px solid #555;
    border-width: 0 0 2px 2px;
    transform: rotate(45deg);
}
.hscroll .next::before {
    transform: rotate(225deg);
}
.vscroll .up::before {
    transform: rotate(135deg);
}
.vscroll .down::before {
    transform: rotate(-45deg);
}
.track {
    flex: 1;
}
.thumb {
    display: block;
    width: 100%;
    height: 100%;
    background: #cbcbcb;
}
.thumb.long {
    width: 83%;
}
.thumb.mid {
    width: 56%;
}
.thumb.small {
    width: 37%;
}
.thumb.short {
    height: 35%;
}

/* editor */
.editor {
    display: grid;
    flex: 1;
    min-width: 0;
    grid-template-rows: 34px minmax(0, 1fr) 17px;
    grid-template-columns: minmax(0, 1fr) 16px;
    padding: 0 1px 0 4px;
}
.command-row {
    display: flex;
    grid-column: 1 / 3;
    align-items: center;
    padding-left: 7px;
}
.coords {
    width: 128px;
}
.select.command {
    flex: 1;
    margin-right: 3px;
}
.select.command select {
    border-color: #aaa;
    background: #d8d8d8;
    color: #888;
}
.canvas {
    position: relative;
    overflow: hidden;
    background: #272727;
}
.board {
    width: 515px;
    height: 807px;
}
.editor .hscroll button {
    width: 19px;
}
.side-tabs {
    position: absolute;
    top: 9px;
    right: 3px;
    display: flex;
    flex-direction: column;
    gap: 15px;
}
.side-tabs button {
    display: flex;
    align-items: center;
    gap: 7px;
    width: 27px;
    height: 146px;
    padding-top: 8px;
    background: #3b3b3b;
    color: #fff;
    font-family: "Open Sans", sans-serif;
    font-size: 12px;
    font-weight: 600;
    line-height: 27px;
    writing-mode: vertical-rl;
}
.side-tabs .fusion {
    gap: 10px;
    padding-top: 19px;
}
.side-tabs svg {
    width: 17px;
    height: 17px;
}

/* board layers */
.outline {
    fill: #000;
    stroke: #dba03a;
    stroke-width: 6;
}
.silk {
    fill: none;
    stroke: #a6a6a6;
    stroke-width: 5;
}
.silk-fill {
    fill: #a6a6a6;
}
.silk-text {
    fill: #a6a6a6;
    font-family: "Liberation Sans", sans-serif;
}
.mirror-text {
    fill: #0b7cba;
    font-family: "Liberation Sans", sans-serif;
}
.marks {
    fill: none;
    stroke: #a6a6a6;
    stroke-width: 3;
}
.top, .bottom {
    fill: none;
    stroke-width: 6;
    stroke-linejoin: round;
}
.top {
    stroke: #a80c10;
}
.bottom {
    stroke: #0b7cba;
}
.top.heavy, .bottom.heavy {
    stroke-width: 10;
}
.head-silk, .head-gap, .head-pad, .head-hole, .long-pad,
.pin, .pin-hole, .via, .via-hole {
    fill: none;
    stroke-linecap: round;
}
.head-silk {
    stroke: #a6a6a6;
    stroke-width: 54;
}
.head-gap {
    stroke: #000;
    stroke-width: 44;
}
.head-pad {
    stroke: #34b27b;
    stroke-width: 36;
}
.head-hole {
    stroke: #c04048;
    stroke-width: 12;
    stroke-dasharray: 0 11 .1 99;
    stroke-linecap: square;
}
.long-pad {
    stroke: #34b27b;
    stroke-width: 32;
}
.pin {
    stroke: #34b27b;
    stroke-width: 34;
}
.pin-hole {
    stroke: #3a0508;
    stroke-width: 14;
}
.via {
    stroke: #34b27b;
    stroke-width: 50;
}
.via-hole {
    stroke: #10202a;
    stroke-width: 16;
}
.big-pad {
    fill: none;
    stroke: #34b27b;
    stroke-width: 17;
}
.origin {
    fill: none;
    stroke: #a4b428;
    stroke-width: 3;
}
.cursor {
    fill: none;
    stroke: #fff;
    stroke-width: 3;
    stroke-dasharray: 3 3;
}

/* status bar */
.statusbar {
    display: flex;
    flex: none;
    height: 32px;
    align-items: center;
    padding: 0 0 3px 5px;
    border-top: 1px solid #c6c6c6;
}
.statusbar > span {
    flex: 1;
}
.status-icon, .status-cell, .size-grip {
    height: 26px;
    border-left: 1px solid #d2d2d2;
}
.status-icon {
    width: 29px;
    padding: 3px 4px;
}
.status-icon svg {
    width: 20px;
    height: 20px;
}
.status-cell {
    width: 23px;
}
.size-grip {
    width: 19px;
    padding: 15px 0 0 7px;
}
.size-grip svg {
    width: 10px;
    height: 10px;
}

/* dialog */
.dialog {
    position: absolute;
    top: 330px;
    left: 413px;
    width: 216px;
    padding: 0 6px 6px;
    border: 1px solid #a98445;
    background: #eabb6e;
}
.dialog-title {
    display: flex;
    height: 30px;
    align-items: center;
}
.dialog-title > svg {
    width: 16px;
    height: 16px;
    margin-left: 3px;
}
.dialog-title h2 {
    flex: 1;
    padding-left: 12px;
    font-size: 15px;
    text-align: center;
}
.dialog-title button {
    display: grid;
    align-self: flex-start;
    width: 31px;
    height: 20px;
    place-items: center;
    background: #c75050;
}
.dialog-title button svg {
    width: 10px;
    height: 10px;
}
.dialog-body {
    padding: 10px 11px 11px;
    border: 1px solid #c99c55;
    background: #efefef;
}
.dialog-body label {
    display: block;
    margin-bottom: 4px;
}
.signal-field {
    position: relative;
}
.signal-field input {
    display: block;
    width: 100%;
    height: 24px;
    padding: 0 10px;
    border: 1px solid #0a94d8;
    background: #fff;
}
.signal-field::after {
    content: "";
    position: absolute;
    top: 5px;
    left: 38px;
    width: 1px;
    height: 14px;
    background: #000;
}
.dialog-buttons {
    display: flex;
    gap: 6px;
    margin-top: 16px;
    padding-left: 14px;
}
.dialog-buttons button {
    flex: 1;
    height: 26px;
    align-self: center;
    border: 1px solid #888;
    border-radius: 4px;
    background: #fff;
}
.dialog-buttons .primary {
    height: 28px;
    border: 2px solid #0a94d8;
}
```
